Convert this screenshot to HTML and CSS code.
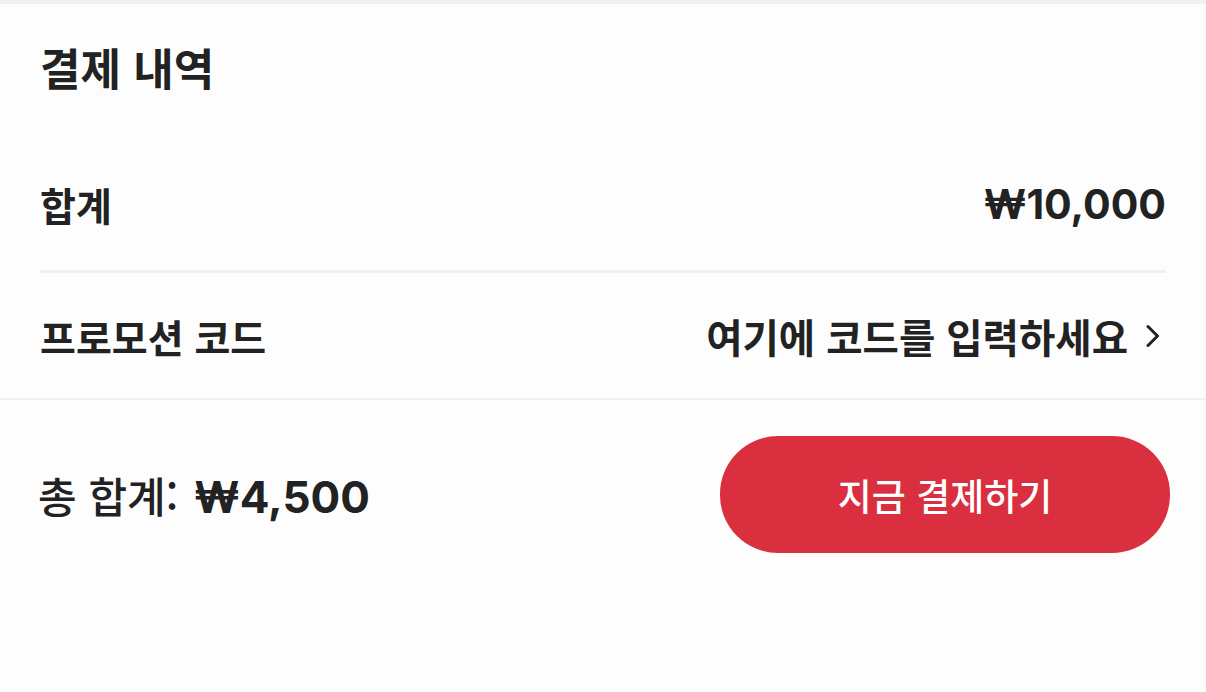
FILE: index.html
```html
<!DOCTYPE html>
<html lang="ko">
<head>
    <meta charset="UTF-8">
    <meta name="viewport" content="width=device-width, initial-scale=1.0">
    <title>결제 내역</title>
    <link rel="stylesheet" href="styles.css">
</head>
<body>
    <div class="summary">
        <h2 class="title">결제 내역</h2>
        <div class="rows">
            <div class="row total-row">
                <span class="label">합계</span>
                <span class="amount">₩10,000</span>
            </div>
            <div class="row promo-row">
                <span class="label">프로모션 코드</span>
                <span class="promo-link">여기에 코드를 입력하세요
                    <svg class="chevron" width="14" height="24" viewBox="0 0 14 24"><path d="M2 2.5 L11.5 12 L2 21.5" fill="none" stroke="#222" stroke-width="3" stroke-linecap="round" stroke-linejoin="round"/></svg>
                </span>
            </div>
        </div>
    </div>
    <div class="checkout">
        <span class="grand-total">총 합계: <b>₩4,500</b></span>
        <button class="pay-button">지금 결제하기</button>
    </div>
</body>
</html>
```

FILE: styles.css
```css
body {
    margin: 0;
    background: #fdfdfd;
    color: #222;
    font-family: "Noto Sans CJK KR", "Noto Sans", sans-serif;
    border-top: 4px solid #f0f0f0;
}
.summary {
    padding: 0 40px;
    border-bottom: 2px solid #f0f0f0;
}
.title {
    margin: 0;
    font-size: 44px;
    font-weight: 700;
    line-height: 60px;
    padding-top: 33px;
}
.rows {
    margin-top: 40px;
}
.row {
    display: flex;
    justify-content: space-between;
    align-items: center;
    height: 125px;
}
.total-row {
    border-bottom: 3px solid #f0f0f0;
    height: 133px;
}
.row .label {
    font-size: 39px;
    font-weight: 700;
}
.amount {
    font-family: "Inter", "Noto Sans CJK KR", sans-serif;
    font-size: 41px;
    font-weight: 700;
}
.promo-link {
    display: flex;
    align-items: center;
    gap: 18px;
    padding-right: 6px;
    font-size: 39.5px;
    font-weight: 700;
}
.checkout {
    display: flex;
    justify-content: space-between;
    align-items: center;
    padding: 36px 36px 0 38px;
}
.grand-total {
    font-size: 42px;
    font-weight: 500;
}
.grand-total b {
    font-family: "Inter", "Noto Sans CJK KR", sans-serif;
    font-size: 44px;
    font-weight: 700;
    margin-left: 4px;
}
.pay-button {
    width: 450px;
    height: 117px;
    border: none;
    border-radius: 58px;
    background: #da2f3f;
    color: #fff;
    font-family: "Noto Sans CJK KR", sans-serif;
    font-size: 37px;
    font-weight: 500;
}
```
